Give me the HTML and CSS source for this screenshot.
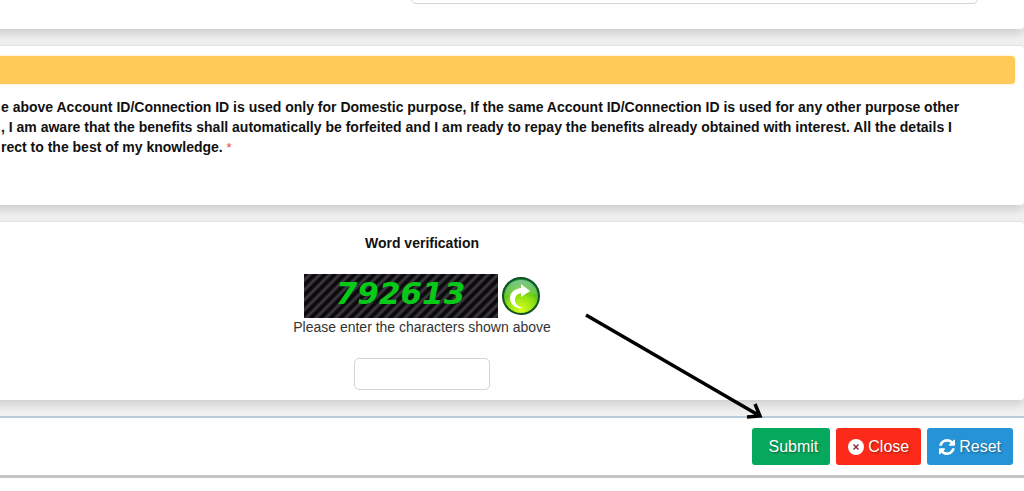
FILE: index.html
```html
<!DOCTYPE html>
<html lang="en">
<head>
  <meta charset="utf-8">
  <title>Word verification</title>
  <link rel="stylesheet" href="styles.css">
</head>
<body>
  <form class="page">
    <section class="panel panel-details">
      <input class="text-input details-input" type="text" aria-label="Details">
    </section>

    <section class="panel panel-declaration">
      <div class="title-bar"></div>
      <p class="declaration">
        e above Account ID/Connection ID is used only for Domestic purpose, If the same Account ID/Connection ID is used for any other purpose other<br>
        , I am aware that the benefits shall automatically be forfeited and I am ready to repay the benefits already obtained with interest. All the details I<br>
        rect to the best of my knowledge. <span class="required">*</span>
      </p>
    </section>

    <section class="panel panel-captcha">
      <h2 class="captcha-title">Word verification</h2>
      <div class="captcha-row">
        <div class="captcha-code">792613</div>
        <button class="refresh" type="button" aria-label="New code">
          <svg viewBox="0 0 40 40" width="40" height="40">
            <defs>
              <radialGradient id="ball" cx="50%" cy="88%" r="80%">
                <stop offset="0" stop-color="#d8ff20"/>
                <stop offset="0.5" stop-color="#8ce010"/>
                <stop offset="1" stop-color="#189a30"/>
              </radialGradient>
              <linearGradient id="shine" x1="0" y1="0" x2="0" y2="1">
                <stop offset="0" stop-color="#fff" stop-opacity="0.45"/>
                <stop offset="1" stop-color="#fff" stop-opacity="0.1"/>
              </linearGradient>
            </defs>
            <circle cx="20" cy="20" r="18" fill="url(#ball)" stroke="#14502a" stroke-width="2"/>
            <path d="M4 20C4 10 11 4 20 4s16 6 16 15c-9-3-22-3-32 1z" fill="url(#shine)"/>
            <path d="M20 8l9 7-9 6v-4c-4 1-6 3-6 7s3 6 7 8c-7 1-12-4-12-10 0-5 4-9 11-10z" fill="#fff"/>
          </svg>
        </button>
      </div>
      <label class="captcha-label" for="captcha">Please enter the characters shown above</label>
      <input class="text-input captcha-input" id="captcha" type="text">
    </section>

    <footer class="actions">
      <button class="btn btn-submit" type="submit">Submit</button>
      <button class="btn btn-close" type="button">
        <svg viewBox="0 0 16 16" width="16" height="16">
          <circle cx="8" cy="8" r="8" fill="#fff"/>
          <path d="M5.5 5.5l5 5m0-5l-5 5" stroke="#8c3048" stroke-width="1.5"/>
        </svg>
        Close
      </button>
      <button class="btn btn-reset" type="reset">
        <svg viewBox="0 0 1536 1536" width="16" height="16">
          <path fill="#fff" d="M1511 928q0 5-1 7-64 268-268 434.500T764 1536q-146 0-282.500-55T238 1324l-129 129q-19 19-45 19t-45-19-19-45V960q0-26 19-45t45-19h448q26 0 45 19t19 45-19 45l-137 137q71 66 161 102t187 36q134 0 250-65t186-179q11-17 53-117 8-23 30-23h192q13 0 22.500 9.500t9.500 22.500zm25-800v448q0 26-19 45t-45 19h-448q-26 0-45-19t-19-45 19-45l138-138Q969 256 768 256q-134 0-250 65T332 500q-11 17-53 117-8 23-30 23H50q-13 0-22.500-9.500T18 608v-7q65-268 270-434.500T768 0q146 0 284 55.500T1297 212l130-129q19-19 45-19t45 19 19 45z"/>
        </svg>
        Reset
      </button>
    </footer>

    <svg class="pointer" viewBox="0 0 180 108" width="180" height="108" aria-hidden="true">
      <path d="M2 3l174 101M171 92l5 12-13 1" fill="none" stroke="#000" stroke-width="3.5"/>
    </svg>
  </form>
</body>
</html>
```
FILE: styles.css
```css
* {
  box-sizing: border-box;
}

body {
  margin: 0;
  overflow: hidden;
  background: #fff;
  color: #111;
  font-family: "Liberation Sans", Arial, sans-serif;
  font-size: 14px;
}

/* the form is wider than the window and runs off its left edge */
.page {
  position: relative;
  margin-left: -180px;
  background: #f1f1f1;
}

.panel {
  margin-bottom: 16px;
  background: #fff;
  border-radius: 4px;
  border-top: 1px solid #e2e2e2;
  box-shadow: 0 5px 10px rgba(0, 0, 0, 0.14);
}

.text-input {
  height: 32px;
  border: 1px solid #d5d5d5;
  border-radius: 5px;
  background: #fff;
  font: inherit;
  padding: 4px 8px;
}

.panel-details {
  display: flex;
  justify-content: flex-end;
  margin-top: -29px;
  padding: 0 46px 25px;
}

.details-input {
  width: 567px;
}

.panel-declaration {
  padding: 10px 9px 47px;
}

.title-bar {
  height: 28px;
  border-radius: 4px;
  background: #ffca58;
  box-shadow: 0 0 2px #ffe08a;
}

.declaration {
  margin: 13px 0 0;
  padding-left: 172px;
  font-weight: bold;
  line-height: 20px;
  white-space: nowrap;
}

.required {
  color: #f0403c;
  font-size: 13px;
  font-weight: normal;
}

.panel-captcha {
  display: flex;
  flex-direction: column;
  align-items: center;
  padding: 12px 0 10px;
}

.captcha-title {
  margin: 0 0 22px;
  font-size: 14px;
  line-height: 18px;
}

.captcha-row {
  display: flex;
  align-items: center;
  gap: 3px;
}

.captcha-code {
  width: 194px;
  height: 44px;
  background: repeating-linear-gradient(135deg, #0a0a0a 0 2px, #3c363e 4px 5px, #0a0a0a 7px);
  color: #08c818;
  font: italic bold 31px/38px "DejaVu Sans", sans-serif;
  text-align: center;
}

.refresh {
  padding: 0;
  border: 0;
  background: none;
  cursor: pointer;
}

.refresh svg {
  display: block;
}

.captcha-label {
  margin-bottom: 22px;
  color: #333;
  line-height: 18px;
}

.captcha-input {
  width: 136px;
}

.actions {
  position: relative;
  display: flex;
  justify-content: flex-end;
  gap: 6px;
  padding: 10px 11px;
  background: #fff;
  border-top: 2px solid #b9cbd9;
  border-bottom: 3px solid #c6c4c4;
}

.btn {
  display: flex;
  align-items: center;
  gap: 4px;
  height: 37px;
  padding: 0 12px;
  border: 0;
  border-radius: 3px;
  color: #fff;
  font: 16px "Liberation Sans", Arial, sans-serif;
  text-shadow: 1px 1px 2px rgba(0, 0, 0, 0.4);
  cursor: pointer;
}

.btn-submit {
  padding-left: 17px;
  background: #06a85c;
}

.btn-close {
  background: #fc2a18;
}

.btn-reset {
  background: #2593d6;
}

/* arrow drawn over the form, ending at the Submit button */
.pointer {
  position: absolute;
  right: 260px;
  bottom: 58px;
}
```
